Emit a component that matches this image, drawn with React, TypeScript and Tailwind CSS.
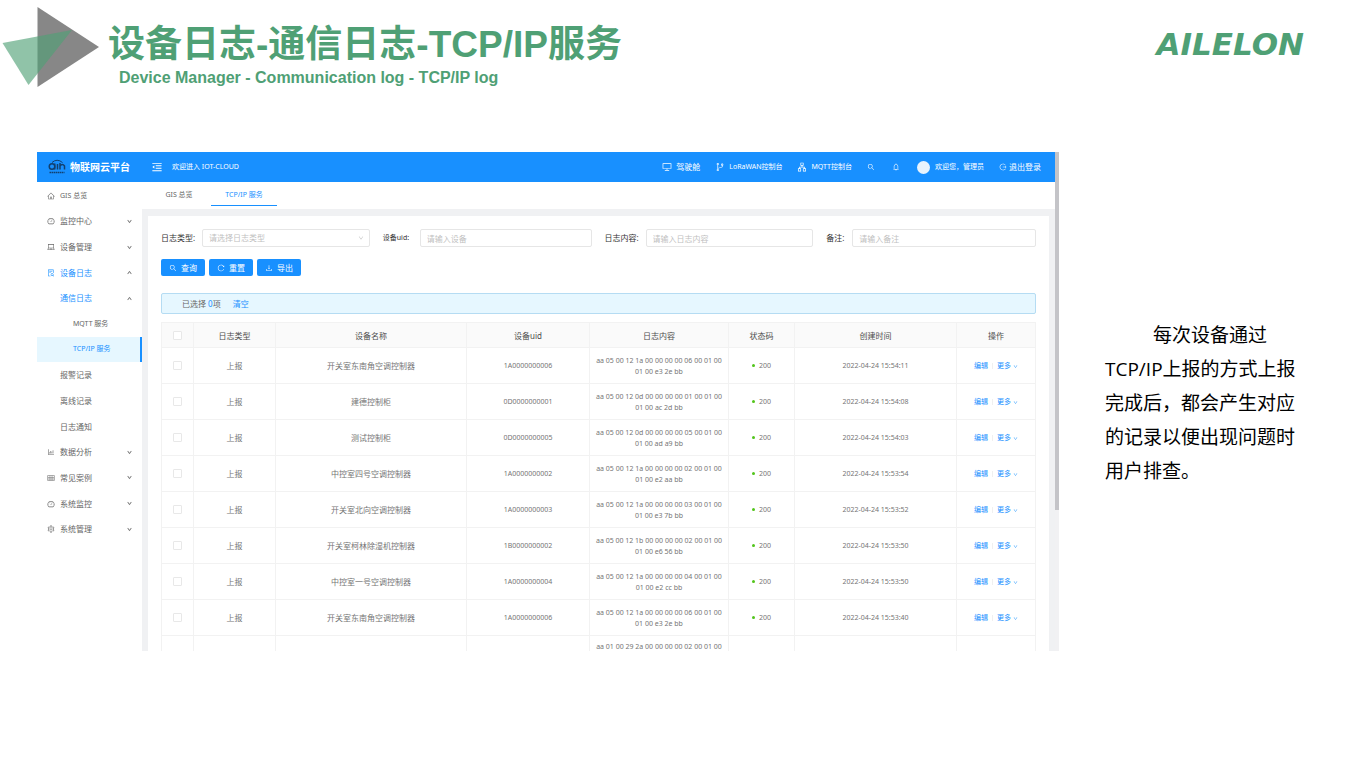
import React from 'react'
import type { IconType } from 'react-icons'
import {
  AiOutlineApartment,
  AiOutlineBarChart,
  AiOutlineBell,
  AiOutlineBranches,
  AiOutlineDashboard,
  AiOutlineDesktop,
  AiOutlineDown,
  AiOutlineDownload,
  AiOutlineFileSearch,
  AiOutlineHome,
  AiOutlineLaptop,
  AiOutlineLogout,
  AiOutlineMenuFold,
  AiOutlineReload,
  AiOutlineSearch,
  AiOutlineSetting,
  AiOutlineTable,
  AiOutlineUp,
} from 'react-icons/ai'

type MenuItem = {
  label: string
  icon?: IconType
  level: 0 | 1 | 2
  arrow?: 'up' | 'down'
  open?: boolean
  selected?: boolean
}

const menu: MenuItem[] = [
  { label: 'GIS 总览', icon: AiOutlineHome, level: 0 },
  { label: '监控中心', icon: AiOutlineDashboard, level: 0, arrow: 'down' },
  { label: '设备管理', icon: AiOutlineLaptop, level: 0, arrow: 'down' },
  { label: '设备日志', icon: AiOutlineFileSearch, level: 0, arrow: 'up', open: true },
  { label: '通信日志', level: 1, arrow: 'up', open: true },
  { label: 'MQTT 服务', level: 2 },
  { label: 'TCP/IP 服务', level: 2, selected: true },
  { label: '报警记录', level: 1 },
  { label: '离线记录', level: 1 },
  { label: '日志通知', level: 1 },
  { label: '数据分析', icon: AiOutlineBarChart, level: 0, arrow: 'down' },
  { label: '常见案例', icon: AiOutlineTable, level: 0, arrow: 'down' },
  { label: '系统监控', icon: AiOutlineDashboard, level: 0, arrow: 'down' },
  { label: '系统管理', icon: AiOutlineSetting, level: 0, arrow: 'down' },
]

const rows = [
  { name: '开关室东南角空调控制器', uid: '1A0000000006', log: 'aa 05 00 12 1a 00 00 00 00 06 00 01 00 01 00 e3 2e bb', time: '2022-04-24 15:54:11' },
  { name: '建德控制柜', uid: '0D0000000001', log: 'aa 05 00 12 0d 00 00 00 00 01 00 01 00 01 00 ac 2d bb', time: '2022-04-24 15:54:08' },
  { name: '测试控制柜', uid: '0D0000000005', log: 'aa 05 00 12 0d 00 00 00 00 05 00 01 00 01 00 ad a9 bb', time: '2022-04-24 15:54:03' },
  { name: '中控室四号空调控制器', uid: '1A0000000002', log: 'aa 05 00 12 1a 00 00 00 00 02 00 01 00 01 00 e2 aa bb', time: '2022-04-24 15:53:54' },
  { name: '开关室北向空调控制器', uid: '1A0000000003', log: 'aa 05 00 12 1a 00 00 00 00 03 00 01 00 01 00 e3 7b bb', time: '2022-04-24 15:53:52' },
  { name: '开关室柯林除湿机控制器', uid: '1B0000000002', log: 'aa 05 00 12 1b 00 00 00 00 02 00 01 00 01 00 e6 56 bb', time: '2022-04-24 15:53:50' },
  { name: '中控室一号空调控制器', uid: '1A0000000004', log: 'aa 05 00 12 1a 00 00 00 00 04 00 01 00 01 00 e2 cc bb', time: '2022-04-24 15:53:50' },
  { name: '开关室东南角空调控制器', uid: '1A0000000006', log: 'aa 05 00 12 1a 00 00 00 00 06 00 01 00 01 00 e3 2e bb', time: '2022-04-24 15:53:40' },
]

const indent = { 0: 'pl-[10px]', 1: 'pl-[23px]', 2: 'pl-[36px]' } as const

function SlideHeader() {
  return (
    <header className="flex h-[88px] items-start pr-[46px]">
      <svg className="mt-1 ml-[2px] h-[84px] w-[98px] shrink-0" viewBox="2 4 98 84" aria-hidden="true">
        <path d="M37.500 7L99 47L37.500 87Z" fill="#878787" />
        <path d="M2.500 43L72 30L28.500 85Z" fill="#4fa075" fillOpacity="0.63" />
      </svg>
      <div className="ml-2 flex-1 font-['Liberation_Sans','Noto_Sans_CJK_SC',sans-serif] font-bold text-[#4fa075]">
        <h1 className="mt-5 text-[37px] leading-[49px]">设备日志-通信日志-TCP/IP服务</h1>
        <p className="ml-[11px] text-base leading-[18px]">Device Manager - Communication log - TCP/IP log</p>
      </div>
      <div className="mt-[26px] font-['DejaVu_Sans',sans-serif] text-[31px] leading-9 font-bold text-[#4fa075] italic">AILELON</div>
    </header>
  )
}

function TopLink({ icon: Icon, label }: { icon: IconType; label: string }) {
  return (
    <a href="#" className={`flex items-center gap-1 ${/[A-Z]/.test(label) ? 'text-[7px]' : 'text-[8px]'}`}>
      <Icon className="size-[10px]" />
      {label}
    </a>
  )
}

function TopBar() {
  return (
    <div className="flex h-[30px] items-center bg-[#1890ff] pr-[14px] text-[8px] text-white">
      <div className="flex w-[105px] items-center gap-1 pl-[11px]">
        <svg className="h-4 w-[18px]" viewBox="0 0 36 32" fill="none" stroke="#12406f" strokeWidth="3" aria-hidden="true">
          <circle cx="8" cy="15" r="5.500" />
          <path d="M13.500 9V21M19 10V21M24 21V8M24 14Q29 8 33 14V21" />
          <path d="M8 7Q18 -2 29 7" strokeWidth="2" />
          <path d="M3 27H33" strokeWidth="3" strokeDasharray="3 1" />
        </svg>
        <span className="text-[10px] font-bold">物联网云平台</span>
      </div>
      <button type="button" className="ml-[9px]" aria-label="收起菜单">
        <AiOutlineMenuFold className="size-3" />
      </button>
      <span className="ml-[9px] text-[7px]">欢迎进入 IOT-CLOUD</span>
      <nav className="ml-auto flex items-center gap-[15px]">
        <TopLink icon={AiOutlineDesktop} label="驾驶舱" />
        <TopLink icon={AiOutlineBranches} label="LoRaWAN控制台" />
        <TopLink icon={AiOutlineApartment} label="MQTT控制台" />
        <button type="button" aria-label="搜索"><AiOutlineSearch className="size-2" /></button>
        <button type="button" className="ml-[2px]" aria-label="通知"><AiOutlineBell className="size-2" /></button>
        <span className="ml-[2px] flex items-center gap-[5px]">
          <span className="size-[13px] rounded-full bg-[#e8f3fd]" />
          <span className="text-[7px]">欢迎您，管理员</span>
        </span>
        <a href="#" className="flex items-center gap-[2px]">
          <AiOutlineLogout className="size-2" />
          退出登录
        </a>
      </nav>
    </div>
  )
}

function SideMenu() {
  return (
    <nav className="w-[105px] shrink-0 bg-white pt-px text-[#666]">
      <ul className="flex h-[359px] flex-col">
        {menu.map(({ label, icon: Icon, level, arrow, open, selected }) => (
          <li key={label} className="flex min-h-0 flex-1">
            <a
              href="#"
              className={`flex flex-1 items-center pr-[10px] ${indent[level]} ${/[A-Z]/.test(label) ? 'text-[7px]' : 'text-[8px]'} ${
                selected ? 'border-r-2 border-[#1890ff] bg-[#e6f7ff] text-[#1890ff]' : open ? 'text-[#1890ff]' : ''
              }`}
            >
              {Icon ? <Icon className="mr-[5px] size-2" /> : null}
              <span className="flex-1">{label}</span>
              {arrow === 'down' ? <AiOutlineDown className="size-[5px] stroke-[80px] text-[#666]" /> : null}
              {arrow === 'up' ? <AiOutlineUp className="size-[5px] stroke-[80px] text-[#666]" /> : null}
            </a>
          </li>
        ))}
      </ul>
    </nav>
  )
}

function Tabs() {
  return (
    <div className="flex h-[27px] bg-white pl-[10px] text-[7px] text-[#666]">
      <button type="button" className="mb-[3px] w-[54px] pt-[2px]">GIS 总览</button>
      <button type="button" className="mb-[3px] ml-[5px] w-[66px] border-b border-[#1890ff] pt-[3px] text-[#1890ff]">TCP/IP 服务</button>
    </div>
  )
}

const fieldStyle = 'h-[18px] w-full rounded-[2px] border border-[#e6e6e6] bg-white px-[6px] text-[#bfbfbf] placeholder:text-[#bfbfbf]'

function Filters() {
  return (
    <form className="grid grid-cols-[209fr_209fr_209fr_210fr] gap-x-[13px] text-[8px] text-[#333]">
      <div className="flex items-center">
        <label htmlFor="log-type" className="w-[41px] shrink-0 whitespace-nowrap">日志类型:</label>
        <div className="relative flex-1">
          <select id="log-type" className={`${fieldStyle} appearance-none border-[#c9d8ea]`}>
            <option>请选择日志类型</option>
          </select>
          <AiOutlineDown className="pointer-events-none absolute top-[6px] right-[6px] size-[6px] text-[#bfbfbf]" />
        </div>
      </div>
      <div className="flex items-center">
        <label htmlFor="uid" className="w-[37px] shrink-0 text-[7px] whitespace-nowrap">设备uid:</label>
        <input id="uid" className={fieldStyle} placeholder="请输入设备" />
      </div>
      <div className="flex items-center">
        <label htmlFor="log-content" className="w-[41px] shrink-0 whitespace-nowrap">日志内容:</label>
        <input id="log-content" className={fieldStyle} placeholder="请输入日志内容" />
      </div>
      <div className="flex items-center">
        <label htmlFor="remark" className="w-[26px] shrink-0 whitespace-nowrap">备注:</label>
        <input id="remark" className={fieldStyle} placeholder="请输入备注" />
      </div>
    </form>
  )
}

function ActionButton({ icon: Icon, label }: { icon: IconType; label: string }) {
  return (
    <button type="button" className="flex h-[17px] w-11 items-center justify-center gap-1 rounded-[2px] bg-[#1890ff] text-[8px] text-white">
      <Icon className="size-2" />
      {label}
    </button>
  )
}

const cell = 'border border-[#f2f2f2] p-0'

function LogTable() {
  return (
    <table className="mt-2 w-full table-fixed border-collapse text-center text-[7px] text-[#757575]">
      <colgroup>
        <col className="w-[32px]" />
        <col className="w-[82px]" />
        <col />
        <col className="w-[123px]" />
        <col className="w-[139px]" />
        <col className="w-[66px]" />
        <col className="w-[162px]" />
        <col className="w-[79px]" />
      </colgroup>
      <thead className="bg-[#fafafa] text-[8px] text-[#4d4d4d]">
        <tr className="h-[25px]">
          <th className={cell}><Tick label="全选" /></th>
          {['日志类型', '设备名称', '设备uid', '日志内容', '状态码', '创建时间', '操作'].map((title) => (
            <th key={title} className={`${cell} pt-px font-normal`}>{title}</th>
          ))}
        </tr>
      </thead>
      <tbody>
        {rows.map((row) => (
          <tr key={row.time + row.uid} className="h-9">
            <td className={cell}><Tick label={row.name} /></td>
            <td className={`${cell} text-[8px]`}>上报</td>
            <td className={`${cell} text-[8px]`}>{row.name}</td>
            <td className={`${cell} pt-px`}>{row.uid}</td>
            <td className={`${cell} px-1 leading-[11px]`}>{row.log}</td>
            <td className={`${cell} pt-px`}>
              <span className="mr-1 inline-block size-[3px] rounded-full bg-[#52c41a] align-middle" />
              200
            </td>
            <td className={`${cell} pt-px`}>{row.time}</td>
            <td className={`${cell} pt-px`}>
              <span className="flex items-center justify-center text-[#1890ff]">
                <a href="#">编辑</a>
                <span className="mx-1 h-[6px] w-px bg-[#f0f0f0]" />
                <a href="#" className="flex items-center gap-[2px]">更多<AiOutlineDown className="size-[5px]" /></a>
              </span>
            </td>
          </tr>
        ))}
        <tr>
          <td className={cell} />
          <td className={cell} />
          <td className={cell} />
          <td className={cell} />
          <td className={`${cell} px-1 pt-[6px] leading-[10px]`}>aa 01 00 29 2a 00 00 00 00 02 00 01 00</td>
          <td className={cell} />
          <td className={cell} />
          <td className={cell} />
        </tr>
      </tbody>
    </table>
  )
}

function Tick({ label }: { label: string }) {
  return (
    <input
      type="checkbox"
      aria-label={label}
      className="mx-auto block size-[9px] appearance-none rounded-[1px] border border-[#e8e8e8] bg-white checked:bg-[#1890ff]"
    />
  )
}

function Console() {
  return (
    <section className="flex h-[499px] min-w-0 flex-1 overflow-hidden font-['Noto_Sans','Noto_Sans_CJK_SC',sans-serif]">
      <div className="flex min-w-0 flex-1 flex-col">
        <TopBar />
        <div className="flex min-h-0 flex-1">
          <SideMenu />
          <div className="min-w-0 flex-1 overflow-hidden bg-[#f0f1f3]">
            <Tabs />
            <div className="mt-[7px] mr-[6px] ml-[6px] bg-white px-[13px] pt-[13px]">
              <Filters />
              <div className="mt-3 flex gap-1">
                <ActionButton icon={AiOutlineSearch} label="查询" />
                <ActionButton icon={AiOutlineReload} label="重置" />
                <ActionButton icon={AiOutlineDownload} label="导出" />
              </div>
              <div className="mt-[17px] flex h-[21px] items-center rounded-[2px] border border-[#b5dcf3] bg-[#e6f7ff] pl-5 text-[8px] text-[#666]">
                已选择&nbsp;<span className="text-[#1890ff]">0</span>项
                <a href="#" className="ml-3 text-[#1890ff]">清空</a>
              </div>
              <LogTable />
            </div>
          </div>
        </div>
      </div>
      <div className="w-1 shrink-0 bg-[#f1f1f3]">
        <div className="h-[358px] bg-[#c4c4c8]" />
      </div>
    </section>
  )
}

export default function App() {
  return (
    <main className="min-h-screen bg-white">
      <SlideHeader />
      <div className="mt-16 flex items-start pr-[46px] pl-[37px]">
        <Console />
        <p className="mt-[166px] ml-[46px] w-[199px] shrink-0 indent-12 font-['Open_Sans','Noto_Sans_CJK_SC',sans-serif] text-[19px] leading-[34px] text-black">
          每次设备通过TCP/IP上报的方式上报完成后，都会产生对应的记录以便出现问题时用户排查。
        </p>
      </div>
    </main>
  )
}
